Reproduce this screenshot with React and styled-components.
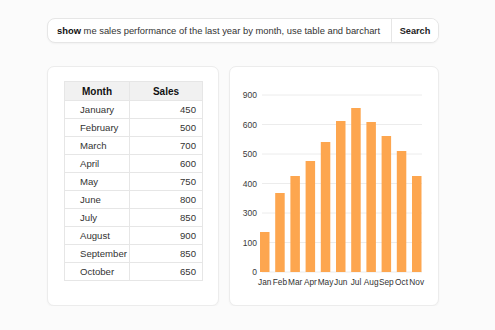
import styled, { createGlobalStyle } from "styled-components";

const GlobalStyle = createGlobalStyle`
	body {
		margin: 0;
		background: #fbfbfb;
		font-family: "Liberation Sans", Arial, sans-serif;
		color: #222;
	}
`

const Page = styled.div`
	padding: 18px 0 0 47px;
	width: 392px;
`

const SearchBar = styled.div`
	display: flex;
	height: 25px;
	border: 1px solid #e6e6e6;
	border-radius: 8px;
	background: #fff;
	box-shadow: 0 1px 2px rgba(0, 0, 0, 0.04);
	box-sizing: border-box;
	overflow: hidden;
`

const Query = styled.div`
	flex: 1;
	display: flex;
	align-items: center;
	padding-left: 9px;
	font-size: 9.4px;
	color: #333;
	white-space: nowrap;
	b {
		font-weight: 700;
		color: #111;
	}
`

const SearchButton = styled.button`
	width: 47px;
	border: none;
	border-left: 1px solid #e6e6e6;
	background: #fff;
	font-family: inherit;
	font-size: 9.2px;
	font-weight: 700;
	color: #222;
	padding: 0;
`

const Cards = styled.div`
	display: grid;
	grid-template-columns: 172px 1fr;
	gap: 10px;
	margin-top: 23px;
`

const Card = styled.div`
	height: 240px;
	background: #fff;
	border: 1px solid #ececec;
	border-radius: 7px;
	box-shadow: 0 1px 2px rgba(0, 0, 0, 0.04);
	box-sizing: border-box;
	padding: ${(p) => p.$pad || "0"};
`

const Table = styled.table`
	width: 139px;
	border-collapse: collapse;
	table-layout: fixed;
	font-size: 9.6px;
	color: #333;
	th, td {
		border: 1px solid #e6e6e6;
		height: 17px;
		padding: 0;
	}
	th {
		height: 18px;
		background: #f1f1f1;
		font-weight: 700;
		font-size: 10px;
		color: #111;
		text-align: center;
	}
`

const MonthHead = styled.th`
	width: 64px;
`

const MonthCell = styled.td`
	padding-left: 15px !important;
	text-align: left;
	white-space: nowrap;
`

const SalesCell = styled.td`
	text-align: right;
	padding-right: 6px !important;
`

const rows = [
	["January", 450], ["February", 500], ["March", 700], ["April", 600],
	["May", 750], ["June", 800], ["July", 850], ["August", 900],
	["September", 850], ["October", 650],
];

const ticks = [
	["900", 28], ["600", 57.5], ["500", 87], ["400", 116.5],
	["300", 146], ["100", 175.5], ["0", 205],
];

const bars = [
	["Jan", 40], ["Feb", 79], ["Mar", 96], ["Apr", 111], ["May", 130],
	["Jun", 151], ["Jul", 164], ["Aug", 150], ["Sep", 136], ["Oct", 121], ["Nov", 96],
];

const Chart = () => (
	<svg width="208" height="238" style={{ display: "block" }}>
		{ticks.map(([label, y]) => (
			<g key={label}>
				<line x1="32" x2="192" y1={y} y2={y} stroke="#ececec" strokeWidth="1" />
				<text x="27" y={y + 3} textAnchor="end" fontSize="8.5" fill="#3a3a3a"
					fontFamily="Liberation Sans, Arial, sans-serif">{label}</text>
			</g>
		))}
		{bars.map(([label, h], i) => (
			<g key={label}>
				<rect x={30 + i * 15.2} y={205 - h} width="9.5" height={h} fill="#fda64f" />
				<text x={34.75 + i * 15.2} y="218" textAnchor="middle" fontSize="8.3" fill="#333"
					fontFamily="Liberation Sans, Arial, sans-serif">{label}</text>
			</g>
		))}
	</svg>
)

const App = () => {
	return (
		<Page>
			<GlobalStyle />
			<SearchBar>
				<Query><b>show</b>&nbsp;me sales performance of the last year by month, use table and barchart</Query>
				<SearchButton>Search</SearchButton>
			</SearchBar>
			<Cards>
				<Card $pad="14px 0 0 16px">
					<Table>
						<thead>
							<tr><MonthHead>Month</MonthHead><th>Sales</th></tr>
						</thead>
						<tbody>
							{rows.map(([m, v]) => (
								<tr key={m}>
									<MonthCell>{m}</MonthCell>
									<SalesCell>{v}</SalesCell>
								</tr>
							))}
						</tbody>
					</Table>
				</Card>
				<Card>
					<Chart />
				</Card>
			</Cards>
		</Page>
	)
}

export default App;
